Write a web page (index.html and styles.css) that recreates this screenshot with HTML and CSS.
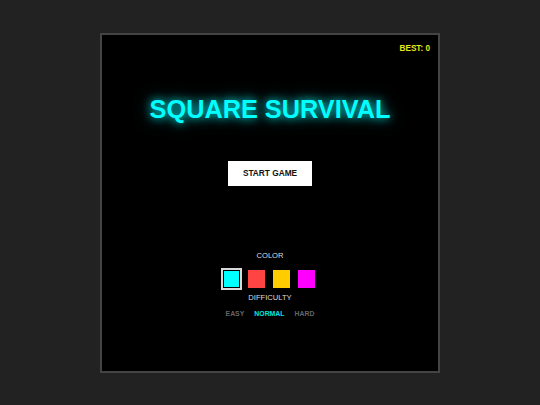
FILE: index.html
```html
<!DOCTYPE html>
<html>
<head>
<meta charset="utf-8">
<link rel="stylesheet" href="styles.css">
</head>
<body>
<div class="game">
  <div class="best">BEST: 0</div>
  <div class="menu">
    <h1 class="title">SQUARE SURVIVAL</h1>
    <button class="start">START GAME</button>
    <div class="label label-color">COLOR</div>
    <div class="swatches">
      <span class="swatch cyan selected"></span>
      <span class="swatch red"></span>
      <span class="swatch yellow"></span>
      <span class="swatch magenta"></span>
    </div>
    <div class="label label-diff">DIFFICULTY</div>
    <div class="diffs">
      <span class="diff">EASY</span>
      <span class="diff active">NORMAL</span>
      <span class="diff">HARD</span>
    </div>
  </div>
</div>
</body>
</html>
```
FILE: styles.css
```css
html, body {
  margin: 0;
  padding: 0;
}
body {
  background: #222222;
  height: 405px;
  display: flex;
  align-items: center;
  justify-content: center;
  font-family: "Liberation Sans", Arial, sans-serif;
}
.game {
  position: relative;
  width: 336px;
  height: 336px;
  border: 2px solid #444444;
  background: #000000;
}
.best {
  position: absolute;
  top: 9px;
  right: 8px;
  font-size: 8.2px;
  line-height: 10px;
  font-weight: bold;
  color: #e8e816;
}
.menu {
  display: flex;
  flex-direction: column;
  align-items: center;
  padding-top: 62.5px;
}
.title {
  margin: 0;
  font-size: 25.3px;
  line-height: 25px;
  font-weight: bold;
  color: #00ffff;
  text-shadow: 0 0 8px rgba(0, 255, 255, 0.8), 0 0 16px rgba(0, 255, 255, 0.5);
}
.start {
  margin-top: 38.5px;
  width: 84px;
  height: 25px;
  border: none;
  padding: 0;
  background: #ffffff;
  color: #111111;
  font-family: "Liberation Sans", Arial, sans-serif;
  font-size: 8.3px;
  font-weight: bold;
}
.label {
  font-size: 7.6px;
  line-height: 9px;
  color: #dddddd;
}
.label-color {
  margin-top: 65px;
}
.swatches {
  margin-top: 8px;
  display: flex;
  gap: 4px;
  margin-left: -2px;
}
.swatch {
  box-sizing: border-box;
  width: 21px;
  height: 22px;
  border: 2px solid transparent;
  background-clip: padding-box;
}
.swatch.selected {
  border-color: #d8d8d8;
  padding: 1px;
  background-clip: content-box;
}
.cyan { background-color: #00ffff; }
.red { background-color: #ff4444; }
.yellow { background-color: #ffcc00; }
.magenta { background-color: #ff00ff; }
.label-diff {
  margin-top: 3.6px;
}
.diffs {
  margin-top: 7.9px;
  display: flex;
  gap: 10px;
}
.diff {
  font-size: 6.9px;
  line-height: 8px;
  font-weight: bold;
  color: #666666;
}
.diff.active {
  color: #00e5e5;
}
```
